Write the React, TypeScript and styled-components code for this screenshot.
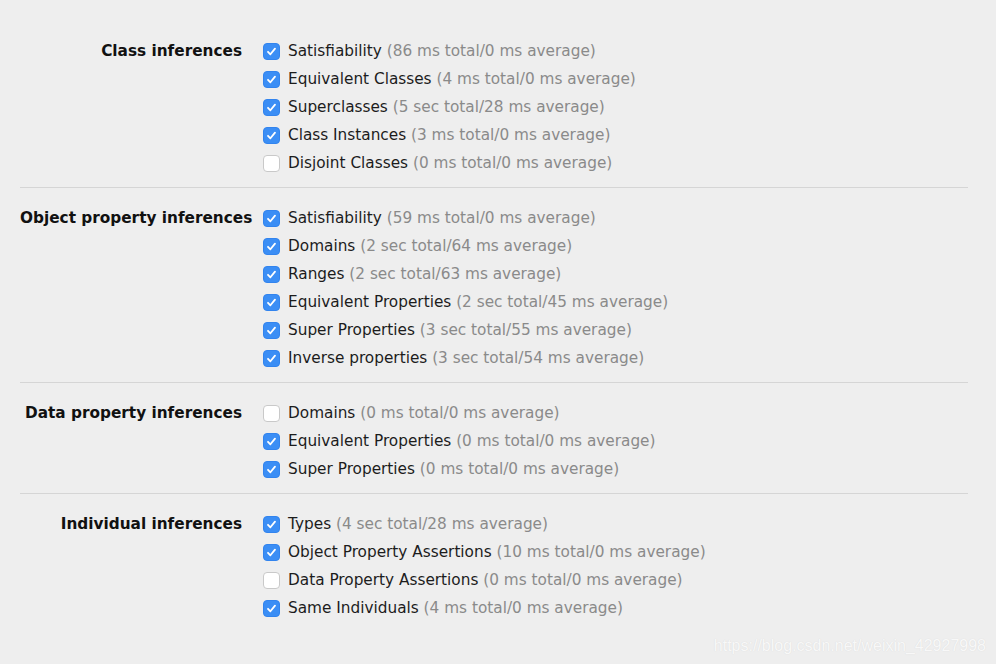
import React from "react";
import styled, { createGlobalStyle } from "styled-components";

const Global = createGlobalStyle`
  html, body { margin: 0; padding: 0; background: #eeeeee; }
  body { font-family: "DejaVu Sans", "Noto Sans", sans-serif; }
`;

const Page = styled.div`
  position: relative;
  width: 996px;
  height: 664px;
  box-sizing: border-box;
  padding: 37px 28px 0 20px;
  background: #eeeeee;
  overflow: hidden;
`;

const Section = styled.section<{ $first?: boolean; $last?: boolean }>`
  display: grid;
  grid-template-columns: 222px 1fr;
  column-gap: 21px;
  padding: ${(p) => (p.$first ? "0" : "16px")} 0 ${(p) => (p.$last ? "0" : "10px")} 0;
  border-bottom: ${(p) => (p.$last ? "none" : "1px solid #d5d5d5")};
`;

const Label = styled.div`
  text-align: right;
  font-weight: bold;
  font-size: 15.3px;
  line-height: 28px;
  color: #111;
  white-space: nowrap;
`;

const List = styled.div`
  display: flex;
  flex-direction: column;
`;

const Row = styled.div`
  display: flex;
  align-items: center;
  height: 28px;
  gap: 8px;
  font-size: 15.3px;
  white-space: nowrap;
`;

const Box = styled.span<{ $checked: boolean }>`
  width: 17px;
  height: 17px;
  box-sizing: border-box;
  border-radius: 4px;
  display: inline-flex;
  align-items: center;
  justify-content: center;
  background: ${(p) => (p.$checked ? "#3b8ef5" : "#ffffff")};
  border: 1px solid ${(p) => (p.$checked ? "#3284ee" : "#c9c9c9")};
  flex-shrink: 0;
`;

const Name = styled.span`
  color: #1c1c1c;
`;

const Stats = styled.span`
  color: #8a8a8a;
`;

const Watermark = styled.div`
  position: absolute;
  right: 10px;
  bottom: 9px;
  font-family: "Liberation Sans", Arial, sans-serif;
  font-size: 16px;
  color: #f8f8f8;
  text-shadow: 0 0 1px #d6d6d6;
`;

type Item = { name: string; stats: string; checked: boolean };
type Group = { label: string; items: Item[] };

const groups: Group[] = [
  {
    label: "Class inferences",
    items: [
      { name: "Satisfiability", stats: "(86 ms total/0 ms average)", checked: true },
      { name: "Equivalent Classes", stats: "(4 ms total/0 ms average)", checked: true },
      { name: "Superclasses", stats: "(5 sec total/28 ms average)", checked: true },
      { name: "Class Instances", stats: "(3 ms total/0 ms average)", checked: true },
      { name: "Disjoint Classes", stats: "(0 ms total/0 ms average)", checked: false },
    ],
  },
  {
    label: "Object property inferences",
    items: [
      { name: "Satisfiability", stats: "(59 ms total/0 ms average)", checked: true },
      { name: "Domains", stats: "(2 sec total/64 ms average)", checked: true },
      { name: "Ranges", stats: "(2 sec total/63 ms average)", checked: true },
      { name: "Equivalent Properties", stats: "(2 sec total/45 ms average)", checked: true },
      { name: "Super Properties", stats: "(3 sec total/55 ms average)", checked: true },
      { name: "Inverse properties", stats: "(3 sec total/54 ms average)", checked: true },
    ],
  },
  {
    label: "Data property inferences",
    items: [
      { name: "Domains", stats: "(0 ms total/0 ms average)", checked: false },
      { name: "Equivalent Properties", stats: "(0 ms total/0 ms average)", checked: true },
      { name: "Super Properties", stats: "(0 ms total/0 ms average)", checked: true },
    ],
  },
  {
    label: "Individual inferences",
    items: [
      { name: "Types", stats: "(4 sec total/28 ms average)", checked: true },
      { name: "Object Property Assertions", stats: "(10 ms total/0 ms average)", checked: true },
      { name: "Data Property Assertions", stats: "(0 ms total/0 ms average)", checked: false },
      { name: "Same Individuals", stats: "(4 ms total/0 ms average)", checked: true },
    ],
  },
];

const Check = () => (
  <svg width="11" height="11" viewBox="0 0 11 11">
    <path d="M2 5.8 L4.4 8.3 L9 2.6" fill="none" stroke="#fff" strokeWidth="1.8" strokeLinecap="round" strokeLinejoin="round" />
  </svg>
);

export default function App() {
  return (
    <>
      <Global />
      <Page>
        {groups.map((g, gi) => (
          <Section key={g.label} $first={gi === 0} $last={gi === groups.length - 1}>
            <Label>{g.label}</Label>
            <List>
              {g.items.map((it) => (
                <Row key={it.name}>
                  <Box $checked={it.checked}>{it.checked && <Check />}</Box>
                  <span>
                    <Name>{it.name}</Name> <Stats>{it.stats}</Stats>
                  </span>
                </Row>
              ))}
            </List>
          </Section>
        ))}
        <Watermark>https://blog.csdn.net/weixin_42927998</Watermark>
      </Page>
    </>
  );
}
